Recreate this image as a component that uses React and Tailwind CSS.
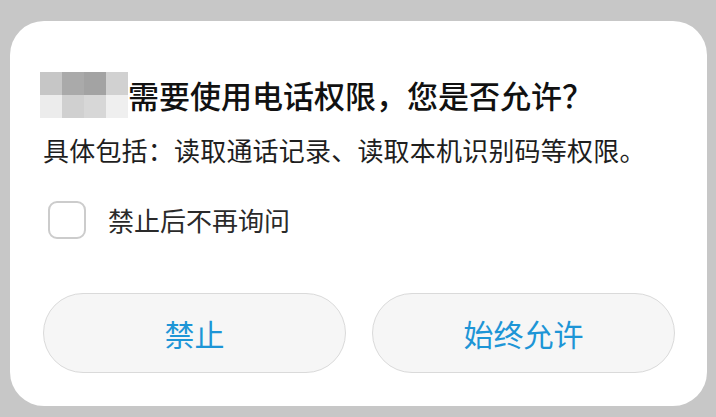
import React from "react";

const font = { fontFamily: '"Noto Sans CJK SC", "Noto Sans", sans-serif' };

export default function App() {
  const cells = [
    "bg-[#c6c6c6]", "bg-[#aaaaaa]", "bg-[#a3a3a3]", "bg-[#d1d1d1]",
    "bg-[#ececec]", "bg-[#d0d0d0]", "bg-[#d7d7d7]", "bg-[#efefef]",
  ];
  return (
    <div
      className="w-[716px] h-[417px] bg-[#c7c7c7] pt-[21px] pl-[10px] overflow-hidden"
      style={font}
    >
      <div className="w-[697px] h-[385px] bg-white rounded-[34px] flex flex-col">
        <div className="mt-[51px] ml-[30px] h-[46px] flex items-center">
          <div className="grid grid-cols-4 grid-rows-2 w-[88px] h-[46px]">
            {cells.map((c, i) => (
              <div key={i} className={c} />
            ))}
          </div>
          <span className="text-[31px] leading-[46px] text-[#111111] font-medium">
            需要使用电话权限，您是否允许？
          </span>
        </div>
        <div className="mt-[15px] ml-[33px] text-[26px] leading-[34px] text-[#1e1e1e] tracking-[0.2px]">
          具体包括：读取通话记录、读取本机识别码等权限。
        </div>
        <div className="mt-[33px] ml-[38px] h-[40px] flex items-center">
          <div className="w-[38px] h-[38px] rounded-[9px] border-2 border-[#cccccc] bg-white" />
          <span className="ml-[22px] text-[26px] leading-[40px] text-[#2a2a2a]">
            禁止后不再询问
          </span>
        </div>
        <div className="mt-[53px] ml-[33px] flex gap-[26px]">
          <button className="w-[303px] h-[80px] rounded-full bg-[#f6f6f6] border border-[#dadada] text-[30px] text-[#1d95d6]">
            禁止
          </button>
          <button className="w-[303px] h-[80px] rounded-full bg-[#f6f6f6] border border-[#dadada] text-[30px] text-[#1d95d6]">
            始终允许
          </button>
        </div>
      </div>
    </div>
  );
}
